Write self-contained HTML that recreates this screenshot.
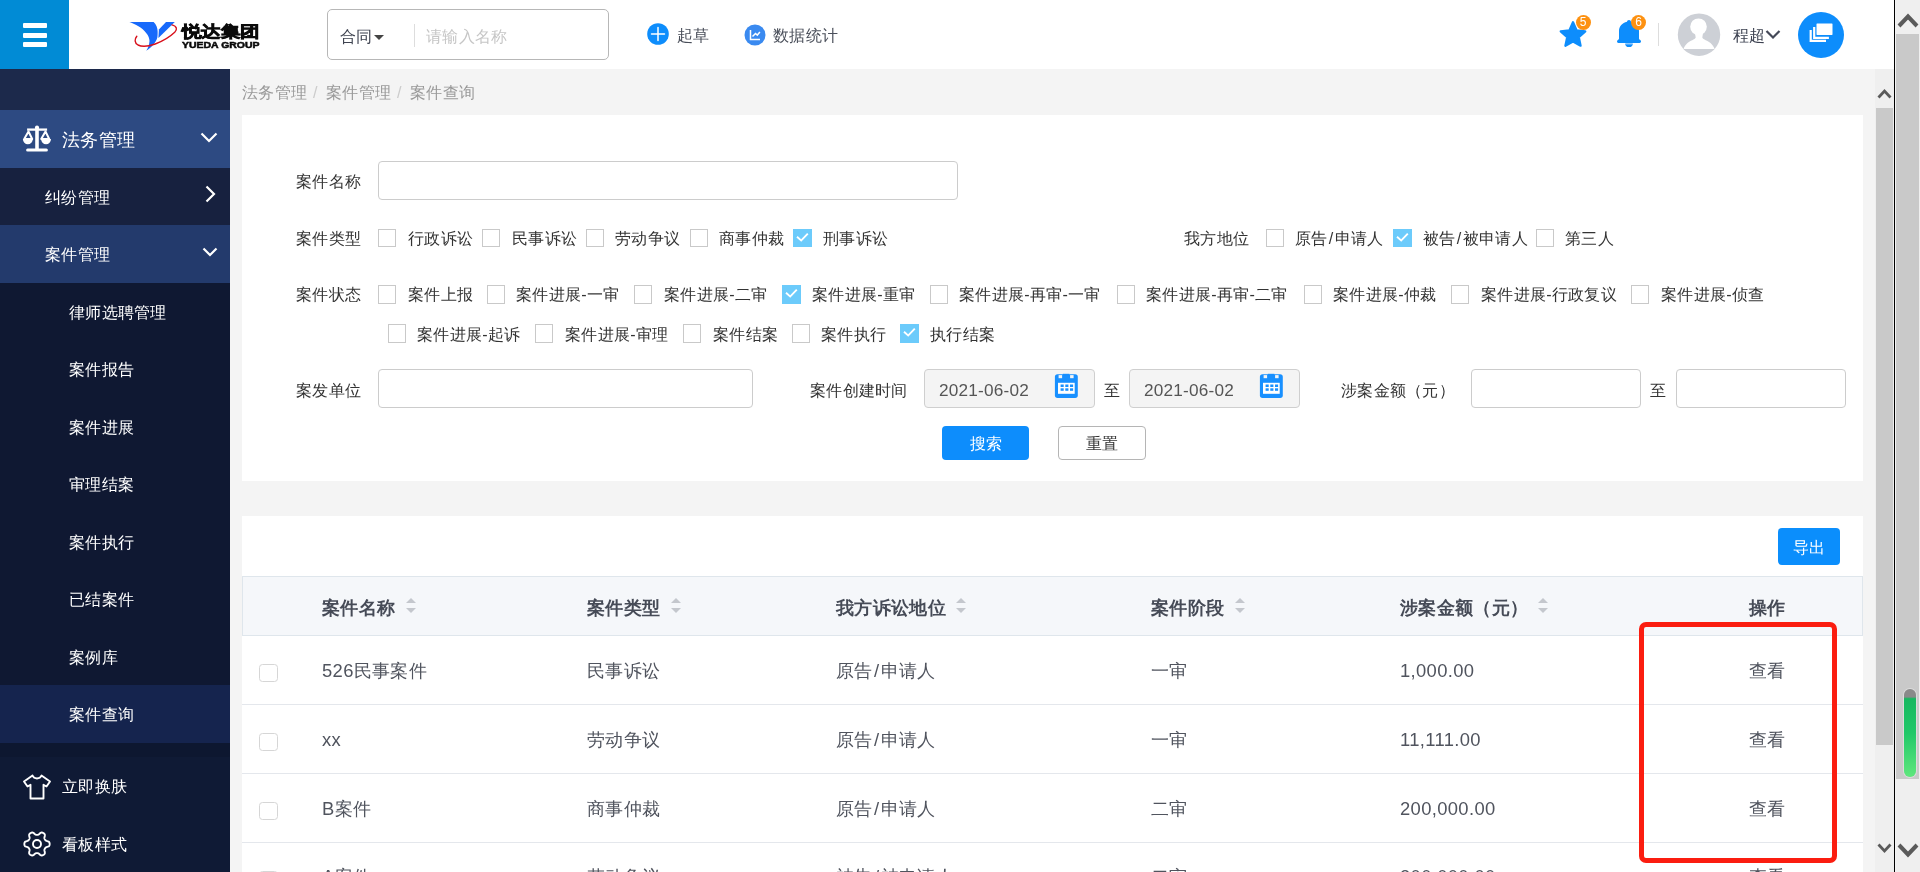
<!DOCTYPE html>
<html lang="zh">
<head>
<meta charset="utf-8">
<title>案件查询</title>
<style>
*{box-sizing:border-box;margin:0;padding:0}
html,body{width:1920px;height:872px;overflow:hidden;background:#f4f4f4;font-family:"Liberation Sans",sans-serif;}
#root{position:relative;width:1920px;height:872px;overflow:hidden;background:#f4f4f4;will-change:transform}
.a{position:absolute;white-space:nowrap}
.t{position:absolute;white-space:nowrap;font-size:16.100px;letter-spacing:0.300px;line-height:24px;height:24px;color:#333}
/* header */
#hdr{left:0;top:0;width:1895px;height:69px;background:#fff}
#burger{left:0;top:0;width:69px;height:69px;background:#018bd5}
#burger i{position:absolute;left:23px;width:24px;height:5px;background:#fff;border-radius:1px}
/* sidebar */
#side{left:0;top:69px;width:230px;height:803px;background:#0f1a35}
.sb{position:absolute;left:0;width:230px}
.st{position:absolute;white-space:nowrap;color:#fff;font-size:16.100px;letter-spacing:0.300px;line-height:24px;height:24px}
/* panels */
.panel{position:absolute;background:#fff}
.inp{position:absolute;height:39px;border:1px solid #ccc;border-radius:4px;background:#fff}
.cb{position:absolute;width:18px;height:19px;border:1px solid #c9c9c9;background:#fff}
.cb.on{width:19px;border:none;background:#6ccbfb}
.cb.on:after{content:"";position:absolute;left:0;top:0;width:19px;height:18px;background:#fff;clip-path:polygon(3.36px 8.40px,8.25px 12.82px,15.49px 5.26px,14.11px 3.94px,8.15px 10.18px,4.64px 7.00px)}
.f{color:#333}
/* table */
.th{position:absolute;white-space:nowrap;font-size:18.400px;letter-spacing:0.350px;font-weight:bold;line-height:26px;height:26px;color:#464b57}
.td{position:absolute;white-space:nowrap;font-size:18.400px;letter-spacing:0.350px;line-height:26px;height:26px;color:#50545e}
.rl{position:absolute;left:242px;width:1621px;height:1px;background:#e4e7ec}
.tcb{position:absolute;left:259.400px;width:18.400px;height:18.400px;border:1px solid #d6d6d6;border-radius:3.500px;background:#fff}
.sort{position:absolute;width:11px;height:16px;margin-left:-0.500px}
.sort:before,.sort:after{content:"";position:absolute;left:0;border-left:5.600px solid transparent;border-right:5.600px solid transparent}
.sort:before{top:0;border-bottom:5.200px solid #c4c7cd}
.sort:after{top:10px;border-top:5.200px solid #c4c7cd}
</style>
</head>
<body>
<div id="root">

<!-- ===== header ===== -->
<div class="a" id="hdr"></div>
<div class="a" id="burger"><i style="top:23px"></i><i style="top:32.500px"></i><i style="top:42px"></i></div>
<!-- logo -->
<svg class="a" style="left:120px;top:12px" width="150" height="46" viewBox="0 0 150 46">
  <path d="M9.400 10 L33.600 10 C36.300 12.500 37.500 16 37.600 19 C37.700 22 37.600 24 37.300 25.800 C36 30.500 31.500 35.500 26.200 38.800 C28 36 29.300 33 29.500 29 C29.500 24 25 18 18 14 C15 12.300 12 11 9.400 10 Z" fill="#1769fb"/>
  <path d="M46 10 L54.800 10 L38.400 26 L38.900 17.500 Z" fill="#1769fb"/>
  <path d="M16.800 24.200 C14.500 27 14.300 31 18 33 C22 35 29 34.200 35.200 32 C42 29.500 50 24.800 54.700 20.300 C57.600 17.300 57 14.300 52 12.900" fill="none" stroke="#d8101c" stroke-width="1.400" stroke-linecap="round"/>
  <text x="61.500" y="25.300" font-family="Liberation Sans, sans-serif" font-size="16" font-weight="900" fill="#0a0a0a" stroke="#0a0a0a" stroke-width="0.700" textLength="78.500" lengthAdjust="spacingAndGlyphs">悦达集团</text>
  <text x="62" y="36" font-family="Liberation Sans, sans-serif" font-size="8.600" font-weight="bold" fill="#0a0a0a" stroke="#0a0a0a" stroke-width="0.500" textLength="77.500" lengthAdjust="spacingAndGlyphs">YUEDA GROUP</text>
</svg>
<!-- search -->
<div class="a" style="left:327px;top:9px;width:282px;height:51px;border:1px solid #b7b7b7;border-radius:5px;background:#fff"></div>
<div class="t" style="left:340px;top:24px;color:#3e4350">合同</div>
<div class="a" style="left:374px;top:35px;width:0;height:0;border-left:5px solid transparent;border-right:5px solid transparent;border-top:5px solid #444"></div>
<div class="a" style="left:414px;top:24px;width:1px;height:23px;background:#ddd"></div>
<div class="t" style="left:426px;top:24px;color:#c6c6c6">请输入名称</div>
<!-- 起草 -->
<svg class="a" style="left:646.500px;top:22.500px" width="22" height="22" viewBox="0 0 22 22"><circle cx="11" cy="11" r="10.800" fill="#0d8dfc"/><path d="M11 4.500v13M4.500 11h13" stroke="#fff" stroke-width="1.500" stroke-linecap="round"/></svg>
<div class="t" style="left:677px;top:23px;color:#4a4f5a">起草</div>
<!-- 数据统计 -->
<svg class="a" style="left:743.500px;top:23.500px" width="22" height="22" viewBox="0 0 22 22"><circle cx="11" cy="11" r="10.5" fill="#3a8af0"/><path d="M6.5 6v9.5H16" stroke="#fff" stroke-width="1.5" fill="none"/><path d="M8.5 12.5l3-3 1.8 1.6 2.6-3" stroke="#fff" stroke-width="1.5" fill="none"/></svg>
<div class="t" style="left:773px;top:23px;color:#4a4f5a">数据统计</div>
<!-- star -->
<svg class="a" style="left:1558px;top:19px" width="30" height="30" viewBox="0 0 32 32"><path d="M16 3.500l3.900 8.600 9.200 1.100-6.900 6.200 1.900 9.100L16 24l-8.100 4.500 1.900-9.100-6.900-6.200 9.200-1.100z" fill="#0d8dfc" stroke="#0d8dfc" stroke-width="2.400" stroke-linejoin="round"/></svg>
<div class="a" style="left:1575.500px;top:14.500px;width:15px;height:15px;border-radius:8px;background:#fd9111;color:#fff;font-size:12px;line-height:15px;text-align:center">5</div>
<!-- bell -->
<svg class="a" style="left:1614px;top:18px" width="30" height="32" viewBox="0 0 30 32"><path d="M15 2c-1.100 0-1.900.7-2 1.800C8.300 4.900 5 8.500 5 13v7.500c0 .6-.3 1-.8 1.300C3.500 22.200 3 22.800 3 23.600c0 .8.600 1.300 1.400 1.300h21.200c.8 0 1.400-.5 1.400-1.300 0-.8-.5-1.400-1.200-1.800-.5-.3-.8-.7-.8-1.300V13c0-4.500-3.300-8.100-8-9.200C16.900 2.700 16.100 2 15 2z" fill="#0d8dfc"/><path d="M11.300 25.700h7.400a3.700 3.400 0 0 1-7.400 0z" fill="#0d8dfc"/><rect x="11.300" y="25.400" width="7.400" height="1.300" fill="#6bb8ff"/></svg>
<div class="a" style="left:1631px;top:14.500px;width:15px;height:15px;border-radius:8px;background:#fd9111;color:#fff;font-size:12px;line-height:15px;text-align:center">6</div>
<div class="a" style="left:1658px;top:23px;width:1px;height:23px;background:#ddd"></div>
<!-- avatar -->
<svg class="a" style="left:1677px;top:13px" width="44" height="44" viewBox="0 0 44 44"><circle cx="22" cy="21.700" r="21.200" fill="#cdd0d6"/><ellipse cx="21.500" cy="13.800" rx="8.300" ry="8.400" fill="#fff"/><path d="M17.800 19 L18.700 24.500 C18 26.600 13 27.600 10.500 30 C8.500 32 7 34 6.600 36 L37.500 36 C37 34 35.500 32 33.500 30 C31 27.600 26 26.600 25.300 24.500 L26.200 19 Z" fill="#fff"/></svg>
<div class="t" style="left:1733px;top:23px;color:#3c4150">程超</div>
<svg class="a" style="left:1765px;top:29px" width="16" height="12" viewBox="0 0 16 12"><path d="M1.500 2l6.500 6.500L14.500 2" stroke="#444958" stroke-width="2.200" fill="none"/></svg>
<!-- layers btn -->
<div class="a" style="left:1798px;top:12px;width:46px;height:46px;border-radius:23px;background:#0d8dfc"></div>
<svg class="a" style="left:1798px;top:12px" width="46" height="46" viewBox="0 0 46 46"><path d="M12.700 18.100V28.900H28" stroke="#fff" stroke-width="2.200" fill="none"/><path d="M16.200 15V25.800H30.900" stroke="#fff" stroke-width="2.200" fill="none"/><rect x="18.500" y="11.400" width="16" height="11.500" rx="0.600" fill="#fff"/></svg>


<!-- ===== sidebar ===== -->
<div class="a" id="side"></div>
<div class="sb" style="top:69px;height:41px;background:#1c294b"></div>
<div class="sb" style="top:110px;height:58px;background:#2d4a82"></div>
<div class="sb" style="top:168px;height:57px;background:#17213f"></div>
<div class="sb" style="top:225px;height:58px;background:#233a6c"></div>
<div class="sb" style="top:283px;height:402px;background:#0f1832"></div>
<div class="sb" style="top:685px;height:58px;background:#15244e"></div>
<div class="sb" style="top:743px;height:14px;background:#0d1730"></div>
<!-- scales icon -->
<svg class="a" style="left:20px;top:122px" width="34" height="32" viewBox="0 0 34 32" fill="none" stroke="#fff">
  <path d="M17 5v22" stroke-width="3.600"/>
  <path d="M7.100 7.600h20" stroke-width="2.300"/>
  <circle cx="17" cy="5.700" r="2.100" fill="#fff" stroke="none"/>
  <path d="M7.600 28h18.800" stroke-width="3" stroke-linecap="round"/>
  <path d="M8.500 9.500L4.200 17h8z" stroke-width="2" stroke-linejoin="round"/>
  <path d="M25.500 9.500l-4.300 7.500h8z" stroke-width="2" stroke-linejoin="round"/>
  <path d="M2.900 17a4.950 5.200 0 0 0 9.900 0z" fill="#fff" stroke="none"/>
  <path d="M21.100 17a4.950 5.200 0 0 0 9.900 0z" fill="#fff" stroke="none"/>
</svg>
<div class="st" style="left:62px;top:128px;font-size:18.400px">法务管理</div>
<svg class="a" style="left:199px;top:131px" width="20" height="14" viewBox="0 0 20 14"><path d="M2.500 2.500L10 10l7.500-7.500" stroke="#fff" stroke-width="2.200" fill="none"/></svg>
<div class="st" style="left:45px;top:185px">纠纷管理</div>
<svg class="a" style="left:203px;top:184px" width="14" height="20" viewBox="0 0 14 20"><path d="M3.500 2.500L11 10l-7.500 7.500" stroke="#fff" stroke-width="2.200" fill="none"/></svg>
<div class="st" style="left:45px;top:242px">案件管理</div>
<svg class="a" style="left:201px;top:246px" width="18" height="14" viewBox="0 0 18 14"><path d="M2.500 2.500L9 9l6.500-6.500" stroke="#fff" stroke-width="2.200" fill="none"/></svg>
<div class="st" style="left:69px;top:300px">律师选聘管理</div>
<div class="st" style="left:69px;top:357px">案件报告</div>
<div class="st" style="left:69px;top:415px">案件进展</div>
<div class="st" style="left:69px;top:472px">审理结案</div>
<div class="st" style="left:69px;top:530px">案件执行</div>
<div class="st" style="left:69px;top:587px">已结案件</div>
<div class="st" style="left:69px;top:645px">案例库</div>
<div class="st" style="left:69px;top:702px">案件查询</div>
<!-- shirt icon -->
<svg class="a" style="left:22px;top:773px" width="30" height="28" viewBox="0 0 30 28" fill="none" stroke="#fff" stroke-width="1.900" stroke-linejoin="round" stroke-linecap="round"><path d="M10.500 2.500L2 8.500l3.500 5 3-1.700V25.500h13V11.800l3 1.700 3.500-5L19.500 2.500c-.8 2-2.500 3-4.500 3s-3.700-1-4.500-3z"/></svg>
<div class="st" style="left:62px;top:774px">立即换肤</div>
<!-- gear icon -->
<svg class="a" style="left:22px;top:829.300px" width="30" height="30" viewBox="0 0 30 30" fill="none" stroke="#fff" stroke-width="1.900" stroke-linejoin="round"><path d="M27.65 15.00 L27.63 15.44 L27.57 15.88 L27.46 16.31 L27.28 16.73 L26.98 17.11 L26.51 17.45 L25.88 17.71 L25.18 17.92 L24.54 18.10 L24.06 18.30 L23.72 18.52 L23.47 18.77 L23.26 19.03 L23.09 19.30 L22.92 19.57 L22.77 19.85 L22.62 20.14 L22.50 20.45 L22.41 20.79 L22.38 21.20 L22.45 21.71 L22.61 22.35 L22.79 23.07 L22.88 23.75 L22.82 24.32 L22.63 24.77 L22.37 25.14 L22.05 25.45 L21.70 25.72 L21.33 25.96 L20.93 26.16 L20.53 26.33 L20.10 26.45 L19.64 26.50 L19.16 26.43 L18.64 26.19 L18.09 25.78 L17.56 25.27 L17.09 24.81 L16.67 24.49 L16.31 24.31 L15.97 24.22 L15.64 24.17 L15.32 24.15 L15.00 24.15 L14.68 24.15 L14.36 24.17 L14.03 24.22 L13.69 24.31 L13.33 24.49 L12.91 24.81 L12.44 25.27 L11.91 25.78 L11.36 26.19 L10.84 26.43 L10.36 26.50 L9.90 26.45 L9.47 26.33 L9.07 26.16 L8.68 25.96 L8.30 25.72 L7.95 25.45 L7.63 25.14 L7.37 24.77 L7.18 24.32 L7.12 23.75 L7.21 23.07 L7.39 22.35 L7.55 21.71 L7.62 21.20 L7.59 20.79 L7.50 20.45 L7.38 20.14 L7.23 19.85 L7.08 19.57 L6.91 19.30 L6.74 19.03 L6.53 18.77 L6.28 18.52 L5.94 18.30 L5.46 18.10 L4.82 17.92 L4.12 17.71 L3.49 17.45 L3.02 17.11 L2.72 16.73 L2.54 16.31 L2.43 15.88 L2.37 15.44 L2.35 15.00 L2.37 14.56 L2.43 14.12 L2.54 13.69 L2.72 13.27 L3.02 12.89 L3.49 12.55 L4.12 12.29 L4.82 12.08 L5.46 11.90 L5.94 11.70 L6.28 11.48 L6.53 11.23 L6.74 10.97 L6.91 10.70 L7.08 10.42 L7.23 10.15 L7.38 9.86 L7.50 9.55 L7.59 9.21 L7.62 8.80 L7.55 8.29 L7.39 7.65 L7.21 6.93 L7.12 6.25 L7.18 5.68 L7.37 5.23 L7.63 4.86 L7.95 4.55 L8.30 4.28 L8.67 4.04 L9.07 3.84 L9.47 3.67 L9.90 3.55 L10.36 3.50 L10.84 3.57 L11.36 3.81 L11.91 4.22 L12.44 4.73 L12.91 5.19 L13.33 5.51 L13.69 5.69 L14.03 5.78 L14.36 5.83 L14.68 5.85 L15.00 5.85 L15.32 5.85 L15.64 5.83 L15.97 5.78 L16.31 5.69 L16.67 5.51 L17.09 5.19 L17.56 4.73 L18.09 4.22 L18.64 3.81 L19.16 3.57 L19.64 3.50 L20.10 3.55 L20.53 3.67 L20.93 3.84 L21.33 4.04 L21.70 4.28 L22.05 4.55 L22.37 4.86 L22.63 5.23 L22.82 5.68 L22.88 6.25 L22.79 6.93 L22.61 7.65 L22.45 8.29 L22.38 8.80 L22.41 9.21 L22.50 9.55 L22.62 9.86 L22.77 10.15 L22.92 10.42 L23.09 10.70 L23.26 10.97 L23.47 11.23 L23.72 11.48 L24.06 11.70 L24.54 11.90 L25.18 12.08 L25.88 12.29 L26.51 12.55 L26.98 12.89 L27.28 13.27 L27.46 13.69 L27.57 14.12 L27.63 14.56 Z"/><circle cx="15" cy="15" r="4"/></svg>
<div class="st" style="left:62px;top:832px">看板样式</div>


<!-- ===== content ===== -->
<div class="t" style="left:242px;top:80px;color:#999">法务管理</div>
<div class="t" style="left:313px;top:80px;color:#ccc">/</div>
<div class="t" style="left:326px;top:80px;color:#999">案件管理</div>
<div class="t" style="left:397px;top:80px;color:#ccc">/</div>
<div class="t" style="left:410px;top:80px;color:#999">案件查询</div>

<div class="panel" style="left:242px;top:115px;width:1621px;height:366px"></div>
<div class="panel" style="left:242px;top:516px;width:1621px;height:356px"></div>
<div class="t f" style="left:296px;top:169px;">案件名称</div>
<div class="inp" style="left:378px;top:161px;width:580px"></div>
<div class="t f" style="left:296px;top:226px;">案件类型</div>
<div class="cb" style="left:378px;top:229px;height:18px"></div>
<div class="t f" style="left:408px;top:226px;">行政诉讼</div>
<div class="cb" style="left:482px;top:229px;height:18px"></div>
<div class="t f" style="left:512px;top:226px;">民事诉讼</div>
<div class="cb" style="left:586px;top:229px;height:18px"></div>
<div class="t f" style="left:615px;top:226px;">劳动争议</div>
<div class="cb" style="left:690px;top:229px;height:18px"></div>
<div class="t f" style="left:719px;top:226px;">商事仲裁</div>
<div class="cb on" style="left:793px;top:229px;height:18px"></div>
<div class="t f" style="left:823px;top:226px;">刑事诉讼</div>
<div class="t f" style="left:1184px;top:226px;">我方地位</div>
<div class="cb" style="left:1266px;top:229px;height:18px"></div>
<div class="t f" style="left:1295px;top:226px;">原告<span style="margin:0 1.200px">/</span>申请人</div>
<div class="cb on" style="left:1393px;top:229px;height:18px"></div>
<div class="t f" style="left:1423px;top:226px;">被告<span style="margin:0 1.200px">/</span>被申请人</div>
<div class="cb" style="left:1536px;top:229px;height:18px"></div>
<div class="t f" style="left:1565px;top:226px;">第三人</div>
<div class="t f" style="left:296px;top:282px;">案件状态</div>
<div class="cb" style="left:378px;top:285px"></div>
<div class="t f" style="left:408px;top:282px;">案件上报</div>
<div class="cb" style="left:487px;top:285px"></div>
<div class="t f" style="left:516px;top:282px;">案件进展-一审</div>
<div class="cb" style="left:634px;top:285px"></div>
<div class="t f" style="left:664px;top:282px;">案件进展-二审</div>
<div class="cb on" style="left:782px;top:285px"></div>
<div class="t f" style="left:812px;top:282px;">案件进展-重审</div>
<div class="cb" style="left:930px;top:285px"></div>
<div class="t f" style="left:959px;top:282px;">案件进展-再审-一审</div>
<div class="cb" style="left:1117px;top:285px"></div>
<div class="t f" style="left:1146px;top:282px;">案件进展-再审-二审</div>
<div class="cb" style="left:1304px;top:285px"></div>
<div class="t f" style="left:1333px;top:282px;">案件进展-仲裁</div>
<div class="cb" style="left:1451px;top:285px"></div>
<div class="t f" style="left:1481px;top:282px;">案件进展-行政复议</div>
<div class="cb" style="left:1631px;top:285px"></div>
<div class="t f" style="left:1661px;top:282px;">案件进展-侦查</div>
<div class="cb" style="left:388px;top:324px"></div>
<div class="t f" style="left:417px;top:322px;">案件进展-起诉</div>
<div class="cb" style="left:535px;top:324px"></div>
<div class="t f" style="left:565px;top:322px;">案件进展-审理</div>
<div class="cb" style="left:683px;top:324px"></div>
<div class="t f" style="left:713px;top:322px;">案件结案</div>
<div class="cb" style="left:792px;top:324px"></div>
<div class="t f" style="left:821px;top:322px;">案件执行</div>
<div class="cb on" style="left:900px;top:324px"></div>
<div class="t f" style="left:930px;top:322px;">执行结案</div>
<div class="t f" style="left:296px;top:378px;">案发单位</div>
<div class="inp" style="left:378px;top:369px;width:375px"></div>
<div class="t f" style="left:810px;top:378px;">案件创建时间</div>
<div class="inp" style="left:924px;top:369px;width:171px;background:#f4f4f4;border-color:#cfcfcf"></div>
<div class="t" style="left:939px;top:378px;font-size:17.200px;letter-spacing:0.200px;color:#555">2021-06-02</div>
<svg class="a" style="left:1054px;top:373px" width="25" height="26" viewBox="0 0 25 26"><rect x="0.900" y="1.300" width="22.900" height="23.600" rx="2.600" fill="#1890ff"/><rect x="4" y="9.800" width="16.700" height="11" fill="#fff"/><rect x="4.600" y="2.100" width="3.500" height="3.100" fill="#f4f4f4"/><rect x="16.100" y="2.100" width="3.500" height="3.100" fill="#f4f4f4"/><rect x="8.800" y="0.800" width="6.600" height="1.500" fill="#1890ff"/><g fill="#1890ff"><rect x="6.600" y="11.500" width="3.100" height="2.500"/><rect x="11.300" y="11.500" width="3.100" height="2.500"/><rect x="16" y="11.500" width="3.100" height="2.500"/><rect x="6.600" y="15.300" width="3.100" height="2.500"/><rect x="11.300" y="15.300" width="3.100" height="2.500"/><rect x="16" y="15.300" width="3.100" height="2.500"/></g></svg>
<div class="inp" style="left:1129px;top:369px;width:171px;background:#f4f4f4;border-color:#cfcfcf"></div>
<div class="t" style="left:1144px;top:378px;font-size:17.200px;letter-spacing:0.200px;color:#555">2021-06-02</div>
<svg class="a" style="left:1259px;top:373px" width="25" height="26" viewBox="0 0 25 26"><rect x="0.900" y="1.300" width="22.900" height="23.600" rx="2.600" fill="#1890ff"/><rect x="4" y="9.800" width="16.700" height="11" fill="#fff"/><rect x="4.600" y="2.100" width="3.500" height="3.100" fill="#f4f4f4"/><rect x="16.100" y="2.100" width="3.500" height="3.100" fill="#f4f4f4"/><rect x="8.800" y="0.800" width="6.600" height="1.500" fill="#1890ff"/><g fill="#1890ff"><rect x="6.600" y="11.500" width="3.100" height="2.500"/><rect x="11.300" y="11.500" width="3.100" height="2.500"/><rect x="16" y="11.500" width="3.100" height="2.500"/><rect x="6.600" y="15.300" width="3.100" height="2.500"/><rect x="11.300" y="15.300" width="3.100" height="2.500"/><rect x="16" y="15.300" width="3.100" height="2.500"/></g></svg>
<div class="t f" style="left:1104px;top:378px;">至</div>
<div class="t f" style="left:1341px;top:378px;">涉案金额（元）</div>
<div class="inp" style="left:1471px;top:369px;width:170px"></div>
<div class="t f" style="left:1650px;top:378px;">至</div>
<div class="inp" style="left:1676px;top:369px;width:170px"></div>
<div class="a" style="left:942px;top:426px;width:87px;height:34px;border-radius:4px;background:#0d8dfc;color:#fff;font-size:16px;line-height:36px;text-align:center">搜索</div>
<div class="a" style="left:1058px;top:426px;width:88px;height:34px;border-radius:4px;background:#fff;border:1px solid #b5b5b5;color:#333;font-size:16px;line-height:34px;text-align:center">重置</div>

<div class="a" style="left:1778px;top:528px;width:62px;height:37px;border-radius:4px;background:#0b8efc;color:#fff;font-size:16.100px;line-height:38px;text-align:center">导出</div>
<div class="a" style="left:242px;top:576px;width:1621px;height:60px;background:#f5f7fa;border:1px solid #dfe6ec"></div>
<div class="th" style="left:322px;top:595px">案件名称</div>
<div class="th" style="left:587px;top:595px">案件类型</div>
<div class="th" style="left:836px;top:595px">我方诉讼地位</div>
<div class="th" style="left:1151px;top:595px">案件阶段</div>
<div class="th" style="left:1400px;top:595px">涉案金额（元）</div>
<div class="th" style="left:1749px;top:595px">操作</div>
<div class="sort" style="left:406px;top:598px"></div>
<div class="sort" style="left:671px;top:598px"></div>
<div class="sort" style="left:956px;top:598px"></div>
<div class="sort" style="left:1235px;top:598px"></div>
<div class="sort" style="left:1538px;top:598px"></div>
<div class="tcb" style="top:664px"></div>
<div class="td" style="left:322px;top:658px">526民事案件</div>
<div class="td" style="left:587px;top:658px">民事诉讼</div>
<div class="td" style="left:836px;top:658px">原告<span style="margin:0 1.200px">/</span>申请人</div>
<div class="td" style="left:1151px;top:658px">一审</div>
<div class="td" style="left:1400px;top:658px">1,000.00</div>
<div class="td" style="left:1749px;top:658px">查看</div>
<div class="rl" style="top:704px"></div>
<div class="tcb" style="top:733px"></div>
<div class="td" style="left:322px;top:727px">xx</div>
<div class="td" style="left:587px;top:727px">劳动争议</div>
<div class="td" style="left:836px;top:727px">原告<span style="margin:0 1.200px">/</span>申请人</div>
<div class="td" style="left:1151px;top:727px">一审</div>
<div class="td" style="left:1400px;top:727px">11,111.00</div>
<div class="td" style="left:1749px;top:727px">查看</div>
<div class="rl" style="top:773px"></div>
<div class="tcb" style="top:802px"></div>
<div class="td" style="left:322px;top:796px">B案件</div>
<div class="td" style="left:587px;top:796px">商事仲裁</div>
<div class="td" style="left:836px;top:796px">原告<span style="margin:0 1.200px">/</span>申请人</div>
<div class="td" style="left:1151px;top:796px">二审</div>
<div class="td" style="left:1400px;top:796px">200,000.00</div>
<div class="td" style="left:1749px;top:796px">查看</div>
<div class="rl" style="top:842px"></div>
<div class="tcb" style="top:871px"></div>
<div class="td" style="left:322px;top:864px">A案件</div>
<div class="td" style="left:587px;top:864px">劳动争议</div>
<div class="td" style="left:836px;top:864px">被告<span style="margin:0 1.200px">/</span>被申请人</div>
<div class="td" style="left:1151px;top:864px">二审</div>
<div class="td" style="left:1400px;top:864px">300,000.00</div>
<div class="td" style="left:1749px;top:864px">查看</div>
<div class="rl" style="top:911px"></div>

<div class="a" style="left:1639px;top:622px;width:198px;height:241px;border:5px solid #fb1d10;border-radius:7px"></div>

<!-- inner scrollbar -->
<div class="a" style="left:1875px;top:69px;width:19px;height:803px;background:#efefef"></div>
<div class="a" style="left:1876px;top:108px;width:17px;height:637px;background:#c9c9c9"></div>
<svg class="a" style="left:1877px;top:87px" width="15" height="13" viewBox="0 0 15 13"><path d="M1.500 10.500L7.500 4l6 6.500" stroke="#5a5a5a" stroke-width="2.800" fill="none"/></svg>
<svg class="a" style="left:1877px;top:841.500px" width="15" height="13" viewBox="0 0 15 13"><path d="M1.500 2.500L7.500 9l6-6.500" stroke="#5a5a5a" stroke-width="2.800" fill="none"/></svg>
<!-- outer scrollbar -->
<div class="a" style="left:1894px;top:0;width:1.400px;height:872px;background:#000"></div>
<div class="a" style="left:1896px;top:0;width:24px;height:872px;background:#efefef"></div>
<div class="a" style="left:1896px;top:34px;width:23px;height:745px;background:#c9c9c9"></div>
<svg class="a" style="left:1897px;top:11px" width="22" height="18" viewBox="0 0 22 18"><path d="M2 15L11 5.500 20 15" stroke="#5a5a5a" stroke-width="4" fill="none"/></svg>
<svg class="a" style="left:1897px;top:842px" width="22" height="18" viewBox="0 0 22 18"><path d="M2 3L11 12.500 20 3" stroke="#5a5a5a" stroke-width="4" fill="none"/></svg>
<!-- green pill -->
<div class="a" style="left:1904.300px;top:689px;width:12.200px;height:87.500px;border-radius:6.100px;background:linear-gradient(#8a8a8a 0,#8a8a8a 9%,#17b860 11%,#20c868 50%,#5fe77d 100%);box-shadow:0 0 0 1px rgba(255,255,255,.35)"></div>


</div>
</body>
</html>
